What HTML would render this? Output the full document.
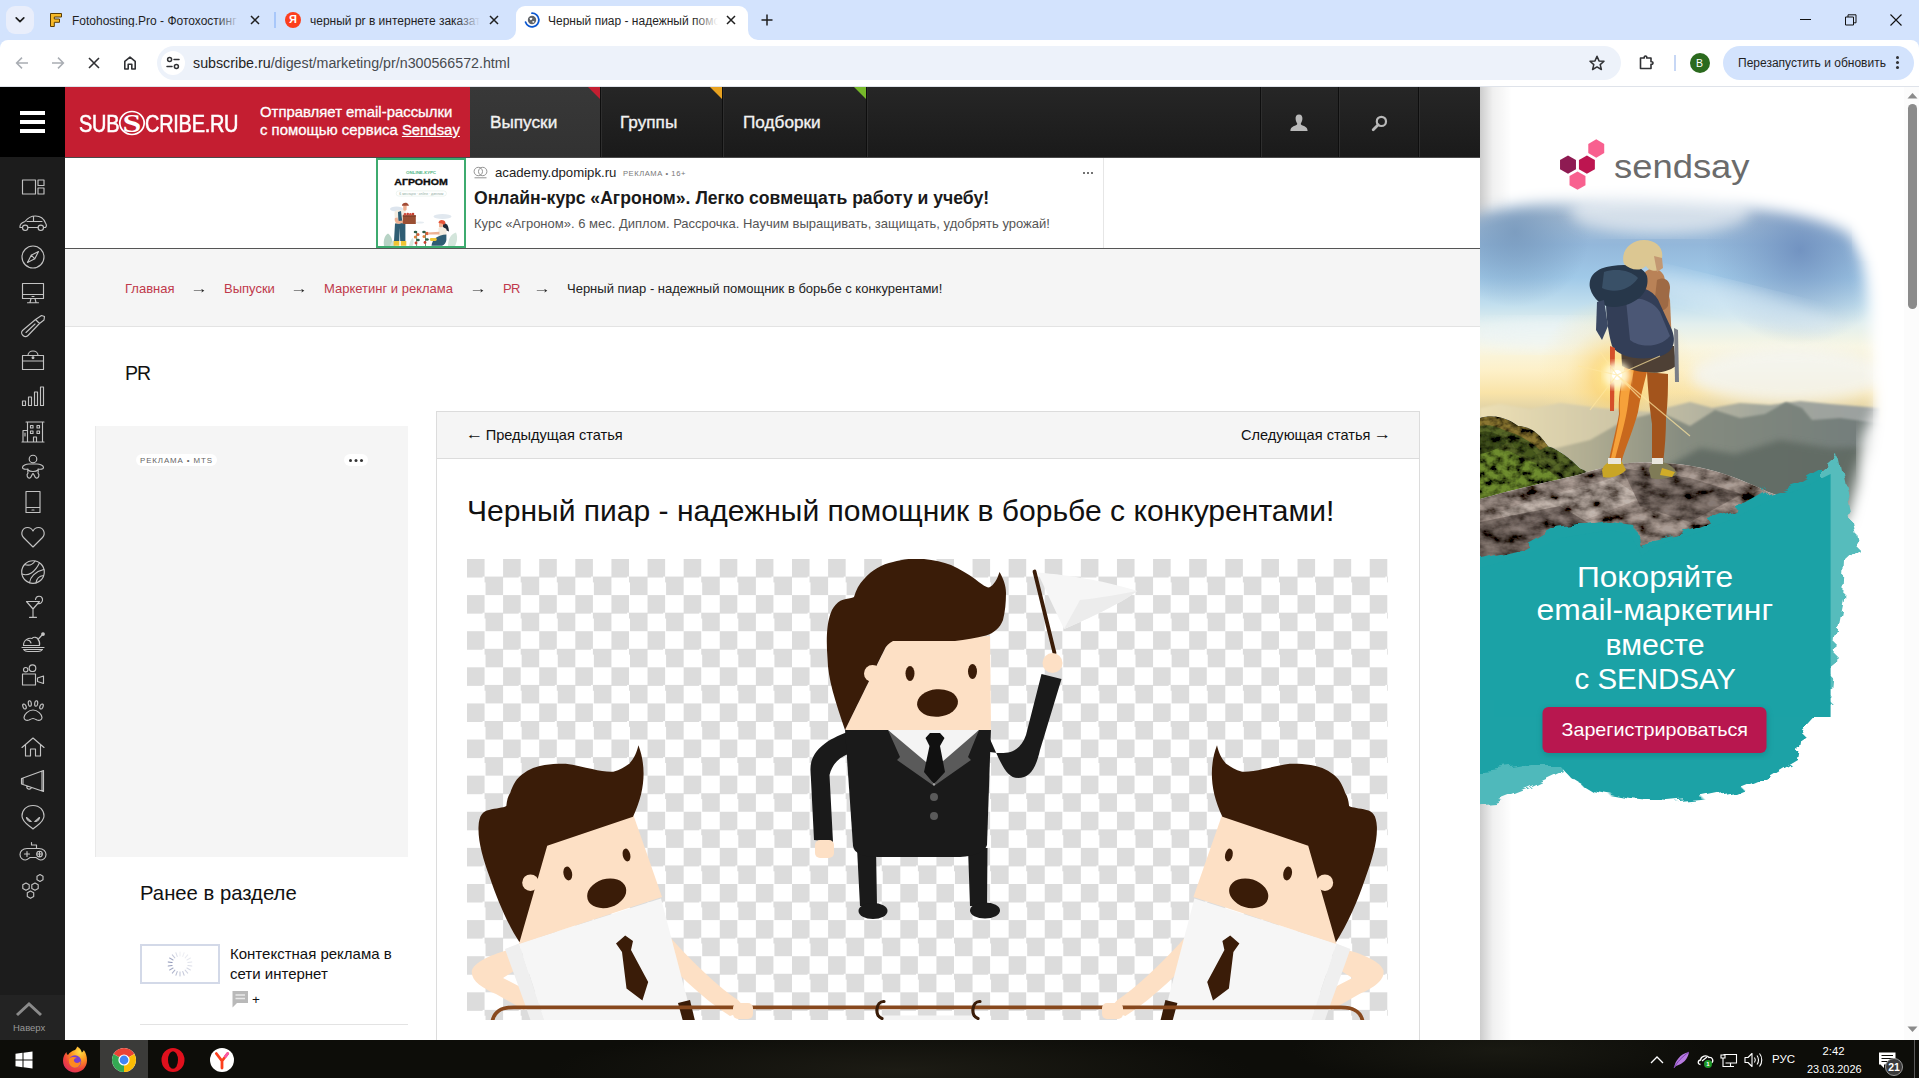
<!DOCTYPE html>
<html lang="ru">
<head>
<meta charset="utf-8">
<title>Черный пиар - надежный помощник в борьбе с конкурентами!</title>
<style>
*{box-sizing:border-box;margin:0;padding:0}
html,body{width:1919px;height:1078px;overflow:hidden;background:#fff}
body{font-family:"Liberation Sans",sans-serif;color:#111;position:relative}
.abs{position:absolute}
.t{position:absolute;white-space:nowrap;line-height:1}
/* ---------- browser chrome ---------- */
#tabstrip{left:0;top:0;width:1919px;height:40px;background:#d3e3fd}
#toolbar{left:0;top:40px;width:1919px;height:47px;background:#fff;border-radius:8px 8px 0 0;box-shadow:0 -8px 0 #d3e3fd;border-bottom:1px solid #dfe3ea}
#tabsearch{left:6px;top:6px;width:28px;height:28px;border-radius:9px;background:#e9eefb}
#acttab{left:516px;top:6px;width:232px;height:34px;background:#fff;border-radius:9px 9px 0 0}
#omni{left:157px;top:46px;width:1464px;height:34px;border-radius:17px;background:#edf2fa}
#siteinfo{left:161px;top:51px;width:24px;height:24px;border-radius:12px;background:#fff}
#relaunch{left:1723px;top:46px;width:191px;height:34px;border-radius:17px;background:#d3e3fd}
.tabtxt{font-size:12px;color:#1f1f1f;top:15px}
/* ---------- page ---------- */
#sidebar{left:0;top:87px;width:65px;height:953px;background:#1c1c1c}
#burger{left:0;top:87px;width:65px;height:70px;background:#000}
#hdr-red{left:65px;top:87px;width:405px;height:70px;background:#c41e31}
#hdr-dark{left:470px;top:87px;width:1010px;height:70px;background:linear-gradient(#262626,#1a1a1a)}
#crumbs{left:65px;top:248px;width:1415px;height:79px;background:#f5f5f5;border-top:1px solid #555;border-bottom:1px solid #e3e3e3}
#rightad{left:1480px;top:87px;width:423px;height:953px;background:#fff;overflow:hidden}
#scroll{left:1903px;top:87px;width:16px;height:953px;background:#fff}
#taskbar{left:0;top:1040px;width:1919px;height:38px;background:#15140f}

.hdrtxt{font-size:14.9px;color:#fff;-webkit-text-stroke:.3px #fff}
.navtxt{font-size:17.2px;color:#f2f2f2;top:114px;-webkit-text-stroke:.35px #f2f2f2}
.navsep{top:87px;width:2px;height:70px;background:#0e0e0e;border-right:1px solid #2e2e2e}
.tri{top:87px;width:0;height:0;border:6px solid transparent}

.sic{fill:none;stroke:#c2c2c2;stroke-width:1.150;stroke-linejoin:round;stroke-linecap:round}
.crumb{top:282px;font-size:13px}
.lnk{color:#c0394b}
.arr{color:#222;font-size:14px;top:281px;transform:scaleX(1.25);transform-origin:50% 50%}
.ar{display:inline-block;transform:scaleX(1.2) translateY(-1px)}
</style>
</head>
<body>
<!-- ======= BROWSER CHROME ======= -->
<div id="tabstrip" class="abs"></div>
<div id="toolbar" class="abs"></div>
<div id="tabsearch" class="abs"></div>
<div id="acttab" class="abs"></div>
<div id="omni" class="abs"></div>
<div id="siteinfo" class="abs"></div>
<div id="relaunch" class="abs"></div>

<!-- tab search chevron -->
<svg class="abs" style="left:13px;top:14px" width="14" height="12" viewBox="0 0 14 12"><path d="M3.2 3.8 L7 7.6 L10.8 3.8" fill="none" stroke="#1f1f1f" stroke-width="1.7" stroke-linecap="round" stroke-linejoin="round"/></svg>
<!-- tab 1 -->
<svg class="abs" style="left:48px;top:12px" width="16" height="16" viewBox="0 0 16 16"><path d="M2.5 1.5 H13.5 V5 H6.3 V7 H11.5 V10.3 H6.3 V14.5 H2.5 Z" fill="#f6b928" stroke="#5a3d05" stroke-width="1" stroke-linejoin="round"/></svg>
<div class="t tabtxt" style="left:72px;width:166px;overflow:hidden">Fotohosting.Pro - Фотохостинг</div>
<div class="abs" style="left:216px;top:8px;width:24px;height:24px;background:linear-gradient(90deg,rgba(211,227,253,0),#d3e3fd)"></div>
<svg class="abs" style="left:250px;top:15px" width="10" height="10" viewBox="0 0 10 10"><path d="M1 1 L9 9 M9 1 L1 9" stroke="#1f1f1f" stroke-width="1.5" fill="none"/></svg>
<div class="abs" style="left:274px;top:12px;width:2px;height:16px;background:#a8c7fa"></div>
<!-- tab 2 -->
<div class="abs" style="left:285px;top:12px;width:16px;height:16px;border-radius:8px;background:#fc3f1d"></div>
<div class="t" style="left:289px;top:14px;font-size:11px;font-weight:bold;color:#fff">Я</div>
<div class="t tabtxt" style="left:310px;width:170px;overflow:hidden">черный pr в интернете заказать</div>
<div class="abs" style="left:456px;top:8px;width:24px;height:24px;background:linear-gradient(90deg,rgba(211,227,253,0),#d3e3fd)"></div>
<svg class="abs" style="left:489px;top:15px" width="10" height="10" viewBox="0 0 10 10"><path d="M1 1 L9 9 M9 1 L1 9" stroke="#1f1f1f" stroke-width="1.5" fill="none"/></svg>
<!-- active tab feet -->
<svg class="abs" style="left:506px;top:30px" width="10" height="10" viewBox="0 0 10 10"><path d="M10 0 V10 H0 A10 10 0 0 0 10 0 Z" fill="#fff"/></svg>
<svg class="abs" style="left:748px;top:30px" width="10" height="10" viewBox="0 0 10 10"><path d="M0 0 V10 H10 A10 10 0 0 1 0 0 Z" fill="#fff"/></svg>
<!-- active tab favicon: spinner + globe -->
<svg class="abs" style="left:524px;top:12px" width="16" height="16" viewBox="0 0 16 16"><path d="M8 1.2 A6.8 6.8 0 1 1 1.6 10.2" fill="none" stroke="#0b57d0" stroke-width="1.8" stroke-linecap="round"/><circle cx="8" cy="8" r="4.2" fill="#5f6368"/><path d="M5.5 6.5 Q7 5 8.5 6.2 Q8 8 6.5 8.2 Z M8.5 9 Q10 8.5 10.5 10 Q9.5 11 8.5 10.5 Z" fill="#fff"/></svg>
<div class="t tabtxt" style="left:548px;width:170px;overflow:hidden">Черный пиар - надежный помощник</div>
<div class="abs" style="left:694px;top:8px;width:24px;height:24px;background:linear-gradient(90deg,rgba(255,255,255,0),#fff)"></div>
<svg class="abs" style="left:726px;top:15px" width="10" height="10" viewBox="0 0 10 10"><path d="M1 1 L9 9 M9 1 L1 9" stroke="#1f1f1f" stroke-width="1.5" fill="none"/></svg>
<svg class="abs" style="left:761px;top:14px" width="12" height="12" viewBox="0 0 12 12"><path d="M6 0.5 V11.5 M0.5 6 H11.5" stroke="#1f1f1f" stroke-width="1.5" fill="none"/></svg>
<!-- window controls -->
<div class="abs" style="left:1800px;top:19px;width:11px;height:1px;background:#111"></div>
<svg class="abs" style="left:1845px;top:14px" width="12" height="12" viewBox="0 0 12 12"><path d="M0.5 3 H8.5 V11 H0.5 Z M3 3 V0.8 H11 V8.8 H8.5" fill="none" stroke="#111" stroke-width="1"/></svg>
<svg class="abs" style="left:1890px;top:14px" width="12" height="12" viewBox="0 0 12 12"><path d="M0.5 0.5 L11.5 11.5 M11.5 0.5 L0.5 11.5" stroke="#111" stroke-width="1.1" fill="none"/></svg>
<!-- nav buttons -->
<svg class="abs" style="left:15px;top:56px" width="14" height="14" viewBox="0 0 14 14"><path d="M13 7 H1.8 M7 1.6 L1.6 7 L7 12.4" fill="none" stroke="#a9adb3" stroke-width="1.5"/></svg>
<svg class="abs" style="left:51px;top:56px" width="14" height="14" viewBox="0 0 14 14"><path d="M1 7 H12.2 M7 1.6 L12.4 7 L7 12.4" fill="none" stroke="#a9adb3" stroke-width="1.5"/></svg>
<svg class="abs" style="left:88px;top:57px" width="12" height="12" viewBox="0 0 12 12"><path d="M1 1 L11 11 M11 1 L1 11" stroke="#303134" stroke-width="1.6" fill="none"/></svg>
<svg class="abs" style="left:122px;top:55px" width="16" height="16" viewBox="0 0 16 16"><path d="M2.8 14 V6.4 L8 2.2 L13.2 6.4 V14 H9.8 V9.2 H6.2 V14 Z" fill="none" stroke="#303134" stroke-width="1.6" stroke-linejoin="round"/></svg>
<!-- site info (tune) -->
<svg class="abs" style="left:165px;top:55px" width="16" height="16" viewBox="0 0 16 16"><g fill="none" stroke="#303134" stroke-width="1.5" stroke-linecap="round"><circle cx="4.6" cy="4.6" r="2"/><path d="M9 4.6 H14"/><circle cx="11.4" cy="11.4" r="2"/><path d="M2 11.4 H7"/></g></svg>
<div class="t" style="left:193px;top:56px;font-size:14.250px;color:#1f1f1f">subscribe.ru<span style="color:#474a4f">/digest/marketing/pr/n300566572.html</span></div>
<!-- star -->
<svg class="abs" style="left:1588px;top:54px" width="18" height="18" viewBox="0 0 18 18"><path d="M9 2.2 L11 6.9 L16 7.3 L12.2 10.6 L13.4 15.5 L9 12.9 L4.6 15.5 L5.8 10.6 L2 7.3 L7 6.9 Z" fill="none" stroke="#303134" stroke-width="1.5" stroke-linejoin="round"/></svg>
<!-- extensions -->
<svg class="abs" style="left:1638px;top:53px" width="18" height="18" viewBox="0 0 18 18"><path d="M2.5 5 H6.3 C5.6 2.4 9.4 2.4 8.7 5 H13 V8.8 C15.6 8.1 15.6 11.9 13 11.2 V15.5 H2.5 Z" fill="none" stroke="#303134" stroke-width="1.6" stroke-linejoin="round"/></svg>
<div class="abs" style="left:1674px;top:55px;width:2px;height:16px;background:#c7d7f5"></div>
<div class="abs" style="left:1690px;top:53px;width:20px;height:20px;border-radius:10px;background:#2b6a1e"></div>
<div class="t" style="left:1696px;top:58px;font-size:10.5px;color:#fff">B</div>
<div class="t" style="left:1738px;top:57px;font-size:12px;color:#1f1f1f">Перезапустить и обновить</div>
<div class="abs" style="left:1896px;top:56px;width:3px;height:3px;border-radius:2px;background:#303134;box-shadow:0 5px 0 #303134,0 10px 0 #303134"></div>


<!-- ======= PAGE ======= -->
<div id="sidebar" class="abs"></div>
<div id="burger" class="abs"></div>
<div id="hdr-red" class="abs"></div>
<div id="hdr-dark" class="abs"></div>

<!-- burger -->
<div class="abs" style="left:20px;top:111px;width:25px;height:4px;background:#fff;box-shadow:0 9px 0 #fff,0 18px 0 #fff"></div>
<!-- logo -->
<div id="logo" class="t" style="left:79px;top:112.500px;font-size:23.200px;color:#fff;transform-origin:0 0;transform:scaleX(.86);letter-spacing:-.3px;-webkit-text-stroke:.55px #fff">SUB<span style="display:inline-block;width:30px"></span>CRIBE.RU</div>
<svg class="abs" style="left:117.500px;top:108.500px" width="28" height="28" viewBox="0 0 28 28"><ellipse cx="14" cy="14" rx="12.200" ry="11.500" fill="none" stroke="#fff" stroke-width="1.700"/><text x="14" y="22.600" text-anchor="middle" font-family="Liberation Serif, serif" font-size="26" font-weight="bold" fill="#fff" transform="translate(14 0) scale(1.3 1) translate(-14 0)">S</text></svg>
<div class="t hdrtxt" style="left:260px;top:105px">Отправляет email-рассылки</div>
<div class="t hdrtxt" style="left:260px;top:123px">с помощью сервиса <span style="text-decoration:underline">Sendsay</span></div>
<!-- nav -->
<div class="abs" style="left:470px;top:87px;width:130px;height:70px;background:linear-gradient(#383838,#323232)"></div>
<div class="abs navsep" style="left:600px"></div>
<div class="abs navsep" style="left:722px"></div>
<div class="abs navsep" style="left:866px"></div>
<div class="abs navsep" style="left:1260px"></div>
<div class="abs navsep" style="left:1338px"></div>
<div class="abs navsep" style="left:1418px"></div>
<div class="abs tri" style="left:588px;border-top-color:#c41e31;border-right-color:#c41e31"></div>
<div class="abs tri" style="left:710px;border-top-color:#e8a220;border-right-color:#e8a220"></div>
<div class="abs tri" style="left:854px;border-top-color:#76b82a;border-right-color:#76b82a"></div>
<div class="t navtxt" style="left:490px">Выпуски</div>
<div class="t navtxt" style="left:620px">Группы</div>
<div class="t navtxt" style="left:743px">Подборки</div>
<!-- user icon -->
<svg class="abs" style="left:1289px;top:113px" width="20" height="20" viewBox="0 0 20 20"><path d="M10 1.5 C12.6 1.5 13.6 3.6 13.4 6 C13.2 8.4 12.3 9.6 11.8 10.4 C11.6 11.6 12.4 12 14.2 12.8 C16.6 13.8 18.4 14.4 18.6 18 H1.4 C1.6 14.4 3.4 13.8 5.8 12.8 C7.6 12 8.4 11.6 8.2 10.4 C7.7 9.6 6.8 8.4 6.6 6 C6.4 3.6 7.4 1.5 10 1.5 Z" fill="#b9b9b9"/></svg>
<!-- search icon -->
<svg class="abs" style="left:1371px;top:114px" width="18" height="18" viewBox="0 0 18 18"><circle cx="10.4" cy="7.4" r="4.6" fill="none" stroke="#b9b9b9" stroke-width="2.2"/><path d="M7.2 10.8 L2.2 15.8" stroke="#b9b9b9" stroke-width="2.8" stroke-linecap="round"/></svg>


<!-- top ad banner -->
<div class="abs" style="left:65px;top:157px;width:1415px;height:1px;background:#4a4a4a"></div>
<div class="abs" style="left:1103px;top:158px;width:1px;height:90px;background:#e6e6e6"></div>
<div class="abs" style="left:376px;top:158px;width:90px;height:90px;border:2px solid #3dab6f;background:#fff;overflow:hidden">
<svg width="86" height="86" viewBox="0 0 86 86" style="position:absolute;left:0;top:0">
<text x="43" y="13.900" text-anchor="middle" font-family="Liberation Sans, sans-serif" font-size="3.900" font-weight="bold" fill="#52b584" textLength="30" lengthAdjust="spacingAndGlyphs">ONLINE-КУРС</text>
<text x="43" y="25.200" text-anchor="middle" font-family="Liberation Sans, sans-serif" font-size="9.700" font-weight="bold" fill="#0d0d0d" stroke="#0d0d0d" stroke-width=".35" textLength="53.500" lengthAdjust="spacingAndGlyphs">АГРОНОМ</text>
<rect x="18.200" y="30.900" width="50.200" height="5.200" rx="2.600" fill="#fff" stroke="#dcebe3" stroke-width=".5"/>
<text x="43.300" y="34.600" text-anchor="middle" font-family="Liberation Sans, sans-serif" font-size="2.700" fill="#8fae9f" textLength="44" lengthAdjust="spacingAndGlyphs">6 месяцев · online · диплом</text>
<!-- clouds, leaves -->
<ellipse cx="18.500" cy="49" rx="6.500" ry="2.400" fill="#dde5ee"/><ellipse cx="64.500" cy="56.500" rx="9" ry="2.500" fill="#e1e8ef"/><ellipse cx="42" cy="62.500" rx="4" ry="1" fill="#e6ecf1"/>
<path d="M6 86 C5 80 7 75 10 73.500 C13.500 76 15 81 14.500 86 Z" fill="#b7d3c5"/><path d="M12 86 C13 82 15 80 17.500 79.500 C18.500 82 18 84.500 17 86 Z" fill="#cfe2d8"/>
<path d="M70 86 C70 79 73 74 78 72.500 C80 77 79 82 77 86 Z" fill="#d3e5db"/><path d="M31 86 C31.500 82 33 79 35 78 C36 81 35.500 84 34.500 86 Z" fill="#d8e8df"/>
<!-- farmer -->
<path d="M16.500 53 C16.500 50.500 19 50 22 50 H27.500 L28.300 64 H17 Z" fill="#f3ece0"/>
<path d="M20 52 L23 51 L24.500 63.500 H27.400 L27.400 81 H22.200 L21.700 68 L21.300 81 H16 L17 63.500 H20.500 Z" fill="#2f5d73"/>
<path d="M25.200 46 C25.200 44.500 28.700 44.500 28.700 46.500 L28.500 50 C27.500 51 26 51 25.200 50 Z" fill="#eeb193"/>
<path d="M23.900 45.700 C24 42.500 29 41.500 30.400 44.500 L31 45.700 Z" fill="#a24b35"/>
<path d="M15.600 81 H21.300 V85.800 H15.600 Z M22.800 81 H28.300 V85.800 H22.800 Z" fill="#f0c534"/>
<path d="M17 58 C16 61 18 63.500 21 64 L26 62.500 L25.500 60.500 L20.500 61 L19.500 57.500 Z" fill="#eeb193"/>
<rect x="24.800" y="55.300" width="13" height="8.700" fill="#9a4f33"/><rect x="24.800" y="55.300" width="13" height="1.400" fill="#7f3f28"/>
<circle cx="27" cy="54.300" r="1.300" fill="#d14a3a"/><circle cx="29.700" cy="54" r="1.300" fill="#c7402f"/><circle cx="32.400" cy="54.300" r="1.300" fill="#d14a3a"/><circle cx="35" cy="54" r="1.300" fill="#c7402f"/>
<!-- plants -->
<path d="M38.600 86 V72 M47.500 86 V72" stroke="#3f7a50" stroke-width=".8"/>
<ellipse cx="37.500" cy="72" rx="1.800" ry="1.300" fill="#2f5d46"/><ellipse cx="40" cy="74.500" rx="1.500" ry="1.500" fill="#d9603a"/><ellipse cx="37.300" cy="77" rx="1.500" ry="1.500" fill="#e0803c"/><ellipse cx="40" cy="80" rx="1.800" ry="1.200" fill="#2f5d46"/><ellipse cx="38" cy="83" rx="1.400" ry="1.400" fill="#c7402f"/>
<ellipse cx="46" cy="72" rx="1.800" ry="1.300" fill="#2f5d46"/><ellipse cx="49" cy="73.500" rx="1.700" ry="1.700" fill="#d9603a"/><ellipse cx="46" cy="76.500" rx="1.500" ry="1.500" fill="#e0803c"/><ellipse cx="49" cy="79.500" rx="1.800" ry="1.200" fill="#2f5d46"/><ellipse cx="47" cy="82.500" rx="1.400" ry="1.400" fill="#c7402f"/>
<!-- woman -->
<path d="M64.900 63 C68 62.500 70 65 70.500 68 L71 71.500 L67.500 70 L65 67 Z" fill="#1f2a38"/>
<path d="M61 63.500 C61 61.800 65 61.800 65 64 L64.900 67 C64 68 62 68 61 67 Z" fill="#eeb193"/>
<path d="M60.500 63 C60.500 59.500 66 59 67.500 62.500 L66 64.900 C64.500 63.500 62.500 63.300 60.500 63 Z" fill="#e8553a"/>
<path d="M60.500 68 C62 67 66 67 68.400 69 L68.400 76.500 H60.500 Z" fill="#f3ece0"/>
<path d="M53.500 85.800 C54 79 60 75 68.400 74.500 L68.400 80 C68 83 66 85 64 85.800 Z" fill="#2f5d73"/>
<path d="M50 72.500 L61.400 71.800 L61.400 74.500 L50 74.500 Z" fill="#eeb193"/>
<rect x="51.800" y="78" width="7" height="3" rx="1.400" fill="#f0c534"/>
</svg></div>
<svg class="abs" style="left:473px;top:166px" width="15" height="14" viewBox="0 0 15 14"><circle cx="5.300" cy="5.500" r="4.200" fill="none" stroke="#888" stroke-width=".9"/><circle cx="9.700" cy="5.500" r="4.200" fill="none" stroke="#888" stroke-width=".9"/><path d="M1.500 11.800 H13.500" stroke="#888" stroke-width=".9"/></svg>
<div class="t" style="left:495px;top:166px;font-size:13.2px;color:#222">academy.dpomipk.ru</div>
<div class="t" style="left:623px;top:170px;font-size:7.6px;color:#777;letter-spacing:.55px">РЕКЛАМА • 16+</div>
<div class="t" style="left:474px;top:190px;font-size:17.6px;font-weight:bold;color:#1a1a1a">Онлайн-курс «Агроном». Легко совмещать работу и учебу!</div>
<div class="t" style="left:474px;top:217px;font-size:13px;color:#555">Курс «Агроном». 6 мес. Диплом. Рассрочка. Научим выращивать, защищать, удобрять урожай!</div>
<div class="abs" style="left:1083px;top:172px;width:2px;height:2px;border-radius:1px;background:#444;box-shadow:4px 0 0 #444,8px 0 0 #444"></div>

<div id="crumbs" class="abs"></div>

<div class="t crumb lnk" style="left:125px">Главная</div>
<div class="t crumb arr" style="left:192px">→</div>
<div class="t crumb lnk" style="left:224px">Выпуски</div>
<div class="t crumb arr" style="left:292px">→</div>
<div class="t crumb lnk" style="left:324px">Маркетинг и реклама</div>
<div class="t crumb arr" style="left:471px">→</div>
<div class="t crumb lnk" style="left:503px;letter-spacing:-.6px">PR</div>
<div class="t crumb arr" style="left:535px">→</div>
<div class="t crumb" style="left:567px;color:#222">Черный пиар - надежный помощник в борьбе с конкурентами!</div>
<div class="t" style="left:125px;top:364px;font-size:19.5px;color:#111;letter-spacing:-.9px">PR</div>

<!-- sidebar icons -->
<svg class="abs sic" style="left:18px;top:172px" width="30" height="30" viewBox="0 0 30 30"><path d="M4.5 8 H17.5 V22 H4.5 Z M20 8 H26 V13.5 H20 Z M20 16 H26 V22 H20 Z"/></svg>
<svg class="abs sic" style="left:18px;top:208px" width="30" height="30" viewBox="0 0 30 30"><path d="M2 19.5 C1.5 16 4 14.5 7 13.5 C10 9.5 13 8 17.5 8 C23 8 26 11 27.5 15 C28.5 16.5 28.5 18.5 27.5 19.5 H25.5 M20 19.5 H10 M4.5 19.5 H2"/><circle cx="7.2" cy="19.8" r="2.7"/><circle cx="22.8" cy="19.8" r="2.7"/><path d="M9 13.5 H24 M15.5 8.5 V13.5"/></svg>
<svg class="abs sic" style="left:18px;top:242px" width="30" height="30" viewBox="0 0 30 30"><circle cx="15" cy="15" r="11"/><path d="M20.5 9.5 L16.8 16.8 L9.5 20.5 L13.2 13.2 Z M13.2 13.2 L16.8 16.8"/></svg>
<svg class="abs sic" style="left:18px;top:278px" width="30" height="30" viewBox="0 0 30 30"><path d="M4.5 5.5 H25.5 V20.5 H4.5 Z M4.5 16.5 H25.5 M13 20.5 L12 24.5 M17 20.5 L18 24.5 M9.5 24.7 H20.5 M14 18.5 H16"/></svg>
<svg class="abs sic" style="left:18px;top:311px" width="30" height="30" viewBox="0 0 30 30"><path d="M17.5 8.5 L23.5 4.5 L26.5 5.5 L26 9 L21.5 12.5 Z M17.5 8.5 L4.5 19.5 C3 21 3.5 23 5 24.5 C6.5 26 8.5 26 10 24.5 L21.5 12.5 M8 21.5 L17 13"/></svg>
<svg class="abs sic" style="left:18px;top:345px" width="30" height="30" viewBox="0 0 30 30"><path d="M4.5 10.5 H25.5 V24.5 H4.5 Z M4.5 16 H25.5 M10 10.5 C10 4.5 20 4.5 20 10.5"/><circle cx="15" cy="12.8" r="0.9" fill="#c8c8c8"/></svg>
<svg class="abs sic" style="left:18px;top:381px" width="30" height="30" viewBox="0 0 30 30"><path d="M4.5 20 H7.5 V24.5 H4.5 Z M10.5 16 H13.5 V24.5 H10.5 Z M16.5 11 H19.5 V24.5 H16.5 Z M22.5 6 H25.5 V24.5 H22.5 Z"/></svg>
<svg class="abs sic" style="left:18px;top:417px" width="30" height="30" viewBox="0 0 30 30"><path d="M4 25 H26 M9.5 25 V5 H24.5 V25 M8 5 H26 M5 25 V13.5 H9.5 M15.5 25 V20 H18.5 V25 M12.5 8.5 H15 V11 H12.5 Z M19 8.5 H21.5 V11 H19 Z M12.5 14 H15 V16.5 H12.5 Z M19 14 H21.5 V16.5 H19 Z M7 16 V19"/></svg>
<svg class="abs sic" style="left:18px;top:452px" width="30" height="30" viewBox="0 0 30 30"><circle cx="15" cy="7" r="3.8"/><path d="M11 12 C8 12 4.5 13.5 4.5 15.5 C4.5 17.5 7.5 17.5 10 17 C9.5 19 9.5 20 10 21 M19 12 C22 12 25.5 13.5 25.5 15.5 C25.5 17.5 22.5 17.5 20 17 C20.5 19 20.5 20 20 21 M11 12 H19 M10 18 C12 20 18 20 20 18 M10 21 C8 23 9.5 26.5 12 26 C13.5 25.5 13.5 22.5 15 21.5 C16.5 22.5 16.5 25.5 18 26 C20.5 26.5 22 23 20 21"/></svg>
<svg class="abs sic" style="left:18px;top:487px" width="30" height="30" viewBox="0 0 30 30"><path d="M8 4.5 H22 V25.5 H8 Z M8 20.5 H22 M14 23 H16"/></svg>
<svg class="abs sic" style="left:18px;top:522px" width="30" height="30" viewBox="0 0 30 30"><path d="M15 25 L5.5 15.5 C2 11.5 4.5 5.5 9.5 5.5 C12 5.5 14 7 15 9 C16 7 18 5.5 20.5 5.5 C25.5 5.5 28 11.5 24.5 15.5 Z"/></svg>
<svg class="abs sic" style="left:18px;top:557px" width="30" height="30" viewBox="0 0 30 30"><circle cx="15" cy="15" r="11.3"/><path d="M6.5 7.5 C11 9 14.5 8 17 4 M4 17 C10 19.5 17 15.5 21.5 5.8 M11.5 25.7 C12 20.5 17 14.5 25.8 12.5 M18 26 C18.5 22 21 19 25.5 18.5"/></svg>
<svg class="abs sic" style="left:18px;top:592px" width="30" height="30" viewBox="0 0 30 30"><path d="M8.5 9.5 H21.5 L15 17 Z M15 17 V25 M11.5 25.3 H18.5 M17.5 7.5 C18 3.5 23.5 3 24.5 7 C25 10 22.5 12 20 11.5"/></svg>
<svg class="abs sic" style="left:18px;top:627px" width="30" height="30" viewBox="0 0 30 30"><path d="M5.5 18.5 C5.5 12.5 11 10.5 14 11.5 C15.5 9.5 19.5 10 20 12.5 L24 8 M5.5 18.5 H21.5 C22 16 21.5 14 20 12.5 M9 13 C11 13 12.5 14 13 16"/><circle cx="25" cy="7" r="1.3" fill="#c8c8c8"/><path d="M4 20.5 H26 M5.5 22.5 C7 24.5 9 24.5 10 24.5 H20 C21 24.5 23 24.5 24.5 22.5 Z"/></svg>
<svg class="abs sic" style="left:18px;top:661px" width="30" height="30" viewBox="0 0 30 30"><circle cx="7.7" cy="8.7" r="2.2"/><circle cx="14.5" cy="7.2" r="3.3"/><path d="M4.5 13 H17.5 V24 H4.5 Z M19.5 17 L25.5 15 V22.5 L19.5 20.5 Z"/></svg>
<svg class="abs sic" style="left:18px;top:696px" width="30" height="30" viewBox="0 0 30 30"><ellipse cx="6.5" cy="10.5" rx="1.5" ry="2.6" transform="rotate(-25 6.5 10.5)"/><ellipse cx="11.8" cy="7.5" rx="1.5" ry="2.8" transform="rotate(-8 11.8 7.5)"/><ellipse cx="18.2" cy="7.5" rx="1.5" ry="2.8" transform="rotate(8 18.2 7.5)"/><ellipse cx="23.5" cy="10.5" rx="1.5" ry="2.6" transform="rotate(25 23.5 10.5)"/><path d="M15 14 C10.5 14 6 18.5 6 21.5 C6 24 8.5 25 11 24 C13 23 14 22.5 15 22.5 C16 22.5 17 23 19 24 C21.5 25 24 24 24 21.5 C24 18.5 19.5 14 15 14 Z"/></svg>
<svg class="abs sic" style="left:18px;top:732px" width="30" height="30" viewBox="0 0 30 30"><path d="M4 15.5 L15 6 L26 15.5 M7.5 13 V24 H12.5 V17 H17.5 V24 H22.5 V13"/></svg>
<svg class="abs sic" style="left:18px;top:766px" width="30" height="30" viewBox="0 0 30 30"><path d="M3.5 12.5 V18 L5 18.5 V12 Z M5 12 L25.5 4.5 V25.5 L5 18.5 M24 5 V25 M9 20 C8 23 12 24.5 13.5 21.5"/></svg>
<svg class="abs sic" style="left:18px;top:802px" width="30" height="30" viewBox="0 0 30 30"><path d="M15 3.5 C8 3.5 4 8.5 4 14 C4 20 10.5 23 15 27 C19.5 23 26 20 26 14 C26 8.5 22 3.5 15 3.5 Z M8.5 15.5 L13 19.5 M21.5 15.5 L17 19.5" /><path d="M8.5 15.5 C9 18 11 19.5 13 19.5 M21.5 15.5 C21 18 19 19.5 17 19.5"/></svg>
<svg class="abs sic" style="left:18px;top:837px" width="30" height="30" viewBox="0 0 30 30"><path d="M9 11.5 H21 C25.5 11.5 28 14.5 28 17.5 C28 21 25 23 22.5 23 C20.5 23 19.5 21.5 18 20.5 H12 C10.5 21.5 9.5 23 7.5 23 C5 23 2 21 2 17.5 C2 14.5 4.500 11.5 9 11.5 Z M18.5 11.5 V8 H13.5 V5.5 M6.5 17 H11.5 M9 14.5 V19.500"/><circle cx="21.5" cy="17" r="2.8"/><path d="M19 17 H24 M21.5 14.5 V19.5"/></svg>
<svg class="abs sic" style="left:18px;top:871px" width="30" height="30" viewBox="0 0 30 30"><path d="M22 3.5 L25 5.2 V8.800 L22 10.5 L19 8.800 V5.2 Z M17 12 L20.200 13.800 V17.500 L17 19.300 L13.800 17.500 V13.800 Z M8 12 L11.200 13.800 V17.500 L8 19.300 L4.800 17.500 V13.800 Z M12.500 20 L15.700 21.800 V25.500 L12.500 27.300 L9.300 25.500 V21.800 Z"/></svg>
<div class="abs" style="left:0;top:995px;width:65px;height:45px;background:#232323"></div>
<svg class="abs" style="left:15px;top:1001px" width="28" height="16" viewBox="0 0 28 16"><path d="M2 14 L14 3 L26 14" fill="none" stroke="#8a8a8a" stroke-width="3"/></svg>
<div class="t" style="left:13px;top:1023px;font-size:9.5px;color:#999">Наверх</div>

<!-- left column -->
<div class="abs" style="left:95px;top:426px;width:313px;height:431px;background:#f5f5f5;border-left:1px solid #e9e9e9"></div>
<div class="abs" style="left:136px;top:454px;width:81px;height:12px;border-radius:6px;background:#fff"></div>
<div class="t" style="left:140px;top:456.500px;font-size:7.9px;color:#666;letter-spacing:.9px">РЕКЛАМА • MTS</div>
<div class="abs" style="left:344px;top:454px;width:24px;height:12px;border-radius:6px;background:#fff"></div>
<div class="abs" style="left:349px;top:459px;width:3px;height:3px;border-radius:2px;background:#333;box-shadow:5.500px 0 0 #333,11px 0 0 #333"></div>
<div class="t" style="left:140px;top:883px;font-size:20.3px;color:#111">Ранее в разделе</div>
<div class="abs" style="left:140px;top:944px;width:80px;height:40px;border:2px solid #d3d9e8;background:#fff"></div>
<svg class="abs" style="left:166px;top:950px" width="28" height="28" viewBox="-14 -14 28 28"><g stroke="#8b93b5" stroke-width="1" stroke-linecap="round">
<path d="M0 -12 V-8" opacity=".15"/><path d="M0 -12 V-8" transform="rotate(20)" opacity=".15"/><path d="M0 -12 V-8" transform="rotate(40)" opacity=".18"/><path d="M0 -12 V-8" transform="rotate(60)" opacity=".2"/><path d="M0 -12 V-8" transform="rotate(80)" opacity=".25"/><path d="M0 -12 V-8" transform="rotate(100)" opacity=".3"/><path d="M0 -12 V-8" transform="rotate(120)" opacity=".35"/><path d="M0 -12 V-8" transform="rotate(140)" opacity=".4"/><path d="M0 -12 V-8" transform="rotate(160)" opacity=".5"/><path d="M0 -12 V-8" transform="rotate(180)" opacity=".55"/><path d="M0 -12 V-8" transform="rotate(200)" opacity=".6"/><path d="M0 -12 V-8" transform="rotate(220)" opacity=".7"/><path d="M0 -12 V-8" transform="rotate(240)" opacity=".8"/><path d="M0 -12 V-8" transform="rotate(260)" opacity=".9"/><path d="M0 -12 V-8" transform="rotate(280)"/><path d="M0 -12 V-8" transform="rotate(300)" opacity=".8"/><path d="M0 -12 V-8" transform="rotate(320)" opacity=".5"/><path d="M0 -12 V-8" transform="rotate(340)" opacity=".3"/></g></svg>
<div class="t" style="left:230px;top:946px;font-size:15px;color:#111">Контекстная реклама в</div>
<div class="t" style="left:230px;top:966px;font-size:15px;color:#111">сети интернет</div>
<svg class="abs" style="left:231px;top:990px" width="20" height="19" viewBox="0 0 20 19"><path d="M1.500 1 H17 V13 H6 L1.500 17.500 Z" fill="#b9b9b9"/><path d="M4.500 5 H14 M4.500 8.500 H14" stroke="#e9e9e9" stroke-width="1.600"/></svg>
<div class="t" style="left:252px;top:993px;font-size:13.500px;color:#111">+</div>
<div class="abs" style="left:140px;top:1024px;width:268px;height:1px;background:#e3e3e3"></div>


<!-- article -->
<div class="abs" style="left:436px;top:411px;width:984px;height:640px;border:1px solid #dcdcdc;background:#fff"></div>
<div class="abs" style="left:437px;top:412px;width:982px;height:47px;background:#f5f5f5;border-bottom:1px solid #dcdcdc"></div>
<div class="t" style="left:467px;top:428px;font-size:14.6px;color:#111"><span class="ar">←</span> Предыдущая статья</div>
<div class="t" style="left:1241px;top:428px;font-size:14.6px;color:#111">Следующая статья <span class="ar">→</span></div>
<div class="t" style="left:467px;top:495.500px;font-size:30.050px;color:#111">Черный пиар - надежный помощник в борьбе с конкурентами!</div>
<div id="pic" class="abs" style="left:467px;top:559px;width:921px;height:461px;background-color:#fff;background-image:conic-gradient(#fff 25%,#dcdcdc 0 50%,#fff 0 75%,#dcdcdc 0);background-size:36.120px 36.120px;background-position:0 0;overflow:hidden">
<svg width="921" height="461" viewBox="467 559 921 461" style="position:absolute;left:0;top:0">
<defs>
<g id="puller">
 <!-- arms -->
 <path d="M516 948 C498 952 476 960 472 970 C470 980 482 988 496 994 L524 1010 L534 994 L503 978 L522 966 Z" fill="#fde0c5"/>
 <path d="M660 925 C680 950 715 985 738 1000 L747 1010 L730 1016 C700 997 672 968 652 946 Z" fill="#fde0c5"/>
 <!-- shirt -->
 <path d="M519 943.500 L661 898.500 L694 1025 L546 1025 Z" fill="#f6f6f6"/>
 <path d="M505 949 L519 943.500 L546 1025 L532 1025 C524 1000 514 975 505 949 Z" fill="#efefef"/>
 <path d="M678 1003 L690 1000 L696 1025 H684 Z" fill="#3a1c08"/>
 <!-- face -->
 <path d="M540 840 L633 814 L662 897 L519 944 Z" fill="#fde0c5"/>
 <!-- hair -->
 <path d="M638.400 745.300 C646 765 646 790 633 816.700 L547.200 845.700 L519.500 942.200 C508 925 497 899 490 878 C483 859 478 842 478.500 827 C479 815 483 811 489 810 C496 808 503 808 506.300 806 C507 800 508 796 510.200 793 C513 784 517 778 522 774.400 C529 769 537 766 544.600 765 C552 764 559 763.500 565.700 763.800 C575 765 584 767.500 592.200 769 C600 771 607 772 613.300 771.700 C620 770 625 767 629.200 763.800 C634 759 637 752 638.400 745.300 Z" fill="#3a1c08"/>
 <circle cx="530.500" cy="882.700" r="8.300" fill="#fde0c5"/>
 <!-- eyes, mouth -->
 <ellipse cx="567.800" cy="873.500" rx="4.300" ry="7" fill="#3a1c08" transform="rotate(-12 567.800 873.500)"/>
 <ellipse cx="626.500" cy="855" rx="3.800" ry="6.500" fill="#3a1c08" transform="rotate(-12 626.500 855)"/>
 <ellipse cx="606.700" cy="893.300" rx="20" ry="14.300" fill="#3a1c08" transform="rotate(-17 606.700 893.300)"/>
 <!-- tie -->
 <path d="M616 943.500 L625.200 935.600 L633 941 L631 950 L648.200 982 L642.400 1000.400 L626.500 988.500 L622 952 Z" fill="#3a1c08"/>
</g>
</defs>
<use href="#puller"/>
<use href="#puller" transform="translate(1855.400 0) scale(-1 1)"/>
<!-- rope -->
<path d="M492 1024 C493 1012 500 1007.300 514 1007.300 H1341 C1355 1007.300 1362 1012 1363 1024" fill="none" stroke="#87481d" stroke-width="3.800"/>
<rect x="880" y="1015.500" width="96" height="5" fill="#f4f4f4"/>
<path d="M884 1001.500 C876 1001 874 1016 882 1018.500 M980 1001.500 C972 1001 970 1016 978 1018.500" fill="none" stroke="#3a1c08" stroke-width="3.200" stroke-linecap="round"/>
<rect x="733" y="1003" width="20" height="16" rx="5" fill="#fde0c5"/><rect x="1102" y="1003" width="21" height="16" rx="5" fill="#fde0c5"/>
<!-- centre man -->
<path d="M1037.500 572.500 C1070 575 1110 582 1137 591 C1120 604 1090 618 1064 629 Z" fill="#f6f6f6"/>
<path d="M1080 600 C1100 598 1120 594 1137 591 C1120 604 1090 618 1064 629 Z" fill="#ececec"/>
<path d="M1034.500 571.500 L1054.500 653" stroke="#3a1c08" stroke-width="3.800" stroke-linecap="round"/>
<circle cx="1052.500" cy="663" r="10" fill="#fde0c5"/>
<!-- arms -->
<path d="M848 732 C825 740 810 752 810.500 770 L814 840 L833 842 L829.500 775 C832 765 838 758 848 754 Z" fill="#1a1a1a"/>
<rect x="815" y="840" width="19" height="18" rx="5" fill="#fde0c5"/>
<path d="M988 735 C1000 760 1005 778 1018 778 C1030 778 1036 768 1040 750 L1061.500 679 L1041.500 674 L1026 735 C1020 752 1008 755 990 752 Z" fill="#1a1a1a"/>
<!-- legs & shoes -->
<path d="M857 848 H876 L877 906 H860 Z M968 848 H987.500 L987 906 H970 Z" fill="#1a1a1a"/>
<ellipse cx="873" cy="911" rx="14.500" ry="8" fill="#1a1a1a"/><ellipse cx="985" cy="910.500" rx="15" ry="8" fill="#1a1a1a"/>
<!-- body -->
<path d="M845 729 H991 L987 845 C985 852 975 856 960 857 H878 C862 857 854 853 853 846 Z" fill="#1a1a1a"/>
<path d="M888 730 H979 L934 786 Z" fill="#f4f4f4"/>
<path d="M888 730 L900 757 L897 760 L934 786 L926 762 Z" fill="#5a5a5a"/>
<path d="M979 730 L968 757 L971 760 L934 786 L942 762 Z" fill="#5a5a5a"/>
<path d="M925.500 738 L930 733 H940 L944.500 738 L940 746 L945 772 L934 784 L924 772 L929.500 746 Z" fill="#111"/>
<circle cx="934" cy="797" r="4" fill="#5a5a5a"/><circle cx="934" cy="816" r="4" fill="#5a5a5a"/>
<!-- face -->
<path d="M889 641 L990 636 L991 730 L845 730 Z" fill="#fde0c5"/>
<!-- hair -->
<path d="M845 730 C835 700 828 680 827.500 658 C826 640 827 625 829.500 617 C832 607 838 600 846 599 C850 598 853 598 854 597 C856 590 859 584 864 579 C872 570 882 564 893 562 C903 559 914 558 924 559 C934 560 943 562 951 565 C960 569 968 574 975 579 C980 583 985 587 989 587.500 C994 585 997 580 999.500 572 C1003 578 1006 585 1006 593 C1006 603 1005 612 1003 620 C1000 628 994 633 986 635.500 C976 638 965 640 955 641 L893 641 C889 643 886 646 884.500 649.500 Z" fill="#3a1c08"/>
<circle cx="872.500" cy="673.500" r="8.500" fill="#fde0c5"/>
<ellipse cx="910" cy="673.500" rx="4.500" ry="7.500" fill="#3a1c08"/><ellipse cx="972.500" cy="671.500" rx="4.500" ry="7.500" fill="#3a1c08"/>
<ellipse cx="937.500" cy="703" rx="20.500" ry="13.700" fill="#3a1c08" transform="rotate(-5 937.500 703)"/>
</svg>
</div>

<div id="rightad" class="abs">

<svg width="423" height="953" viewBox="1480 87 423 953" style="position:absolute;left:0;top:0">
<defs>
<linearGradient id="sky" x1="0" y1="195" x2="0" y2="470" gradientUnits="userSpaceOnUse">
<stop offset="0" stop-color="#d5dfe9"/><stop offset=".08" stop-color="#a6bcd3"/><stop offset=".18" stop-color="#93b7da"/><stop offset=".3" stop-color="#a0c9e8"/><stop offset=".4" stop-color="#c2dfee"/><stop offset=".47" stop-color="#e2efee"/><stop offset=".55" stop-color="#f8f6e3"/><stop offset=".64" stop-color="#fdf0c8"/><stop offset=".72" stop-color="#f9e3a8"/><stop offset=".78" stop-color="#e0d2a6"/><stop offset="1" stop-color="#8e9488"/>
</linearGradient>
<radialGradient id="sun" cx="1617" cy="376" r="80" gradientUnits="userSpaceOnUse">
<stop offset="0" stop-color="#fffbe6"/><stop offset=".14" stop-color="#ffe58a" stop-opacity=".95"/><stop offset=".32" stop-color="#fbd067" stop-opacity=".55"/><stop offset=".65" stop-color="#fbe3a0" stop-opacity=".25"/><stop offset="1" stop-color="#fbe3a0" stop-opacity="0"/>
</radialGradient>
<radialGradient id="cloudL" cx="1515" cy="232" r="75" gradientUnits="userSpaceOnUse"><stop offset="0" stop-color="#7596ba" stop-opacity=".8"/><stop offset="1" stop-color="#6f93b8" stop-opacity="0"/></radialGradient>
<radialGradient id="cloudR" cx="1800" cy="250" r="95" gradientUnits="userSpaceOnUse"><stop offset="0" stop-color="#6c8cbc" stop-opacity=".85"/><stop offset="1" stop-color="#7b9cc4" stop-opacity="0"/></radialGradient>
<linearGradient id="shade" x1="1480" y1="0" x2="1512" y2="0" gradientUnits="userSpaceOnUse"><stop offset="0" stop-color="#000" stop-opacity=".2"/><stop offset=".4" stop-color="#000" stop-opacity=".06"/><stop offset="1" stop-color="#000" stop-opacity="0"/></linearGradient>
<linearGradient id="mt1" x1="1480" y1="0" x2="1880" y2="0" gradientUnits="userSpaceOnUse"><stop offset="0" stop-color="#ecdfb4"/><stop offset=".35" stop-color="#cdc5a6"/><stop offset=".7" stop-color="#a3a79c"/><stop offset="1" stop-color="#9aa0a0"/></linearGradient>
<linearGradient id="mt2" x1="1480" y1="0" x2="1885" y2="0" gradientUnits="userSpaceOnUse"><stop offset="0" stop-color="#d6cba4"/><stop offset=".28" stop-color="#aeab91"/><stop offset=".5" stop-color="#868c80"/><stop offset="1" stop-color="#717c7a"/></linearGradient>
<filter id="rocktex" x="0" y="0" width="100%" height="100%"><feTurbulence type="fractalNoise" baseFrequency=".05 .09" numOctaves="4" seed="3" result="n"/><feColorMatrix in="n" type="matrix" values="1.9 0 0 0 -.42  1.9 0 0 0 -.45  1.9 0 0 0 -.47  0 0 0 0 1" result="g"/><feComposite in="g" in2="SourceGraphic" operator="in" result="gi"/><feBlend in="SourceGraphic" in2="gi" mode="multiply"/></filter>
<filter id="leaftex" x="0" y="0" width="100%" height="100%"><feTurbulence type="fractalNoise" baseFrequency=".12 .14" numOctaves="3" seed="11" result="n"/><feColorMatrix in="n" type="matrix" values="2.4 0 0 0 -.6  2.4 0 0 0 -.6  2.4 0 0 0 -.6  0 0 0 0 1" result="g"/><feComposite in="g" in2="SourceGraphic" operator="in" result="gi"/><feBlend in="SourceGraphic" in2="gi" mode="multiply"/></filter>
<filter id="b6" x="-10%" y="-10%" width="120%" height="120%"><feGaussianBlur stdDeviation="7"/></filter>
<filter id="b3" x="-10%" y="-10%" width="120%" height="120%"><feGaussianBlur stdDeviation="3"/></filter>
<filter id="b1"><feGaussianBlur stdDeviation="1.2"/></filter>
<filter id="rough" x="-5%" y="-5%" width="110%" height="110%"><feTurbulence type="fractalNoise" baseFrequency=".035 .09" numOctaves="2" seed="4" result="n"/><feDisplacementMap in="SourceGraphic" in2="n" scale="16"/></filter>
<clipPath id="photo"><path d="M1470 212 C1500 198 1560 190 1640 192 C1730 194 1810 204 1852 224 C1872 240 1876 290 1880 340 C1886 400 1886 440 1868 470 L1850 520 L1470 600 Z"/></clipPath>
<mask id="photomask" maskUnits="userSpaceOnUse" x="1470" y="150" width="450" height="500"><path d="M1465 218 C1500 204 1560 198 1640 199 C1730 201 1806 211 1846 231 C1864 244 1868 292 1872 340 C1878 400 1878 438 1860 468 L1846 520 L1465 600 Z" fill="#fff" filter="url(#b6)"/></mask>
</defs>
<rect x="1480" y="87" width="423" height="953" fill="#fff"/>
<rect x="1480" y="87" width="34" height="953" fill="url(#shade)"/>
<!-- sendsay logo -->
<g>
<path d="M1596.25 139.30 L1604.22 143.90 L1604.22 153.10 L1596.25 157.70 L1588.28 153.10 L1588.28 143.90 Z" fill="#f8608f"/>
<path d="M1568.00 155.40 L1575.97 160.00 L1575.97 169.20 L1568.00 173.80 L1560.03 169.20 L1560.03 160.00 Z" fill="#8e1b52"/>
<path d="M1586.90 155.40 L1594.87 160.00 L1594.87 169.20 L1586.90 173.80 L1578.93 169.20 L1578.93 160.00 Z" fill="#bd1550"/>
<path d="M1577.50 171.40 L1585.47 176.00 L1585.47 185.20 L1577.50 189.80 L1569.53 185.20 L1569.53 176.00 Z" fill="#f8608f"/>
<text x="1614" y="177.500" font-family="Liberation Sans, sans-serif" font-size="33" fill="#6b6b6b" textLength="135.500" lengthAdjust="spacingAndGlyphs">sendsay</text>
</g>
<!-- photo -->
<g mask="url(#photomask)">
<rect x="1470" y="180" width="440" height="440" fill="url(#sky)"/>
<rect x="1470" y="180" width="440" height="300" fill="url(#cloudL)"/>
<rect x="1470" y="180" width="440" height="300" fill="url(#cloudR)"/>
<ellipse cx="1660" cy="212" rx="90" ry="22" fill="#e4ebf2" opacity=".75" filter="url(#b6)"/>
<ellipse cx="1730" cy="300" rx="110" ry="16" fill="#dcecf6" opacity=".5" filter="url(#b6)" transform="rotate(14 1730 300)"/>
<ellipse cx="1545" cy="335" rx="80" ry="16" fill="#eef6fa" opacity=".6" filter="url(#b6)"/>
<ellipse cx="1790" cy="375" rx="100" ry="28" fill="#f3f5f4" opacity=".8" filter="url(#b6)"/>
<rect x="1470" y="260" width="440" height="240" fill="url(#sun)"/>
<!-- mountains -->
<path d="M1480 408 L1500 404 L1530 409 L1560 403 L1600 408 L1650 412 L1690 402 L1712 408 L1740 403 L1770 405 L1800 401 L1830 404 L1880 408 V520 H1480 Z" fill="url(#mt1)" filter="url(#b1)"/>
<path d="M1480 462 L1540 452 L1590 440 L1625 420 L1660 412 L1690 426 L1715 410 L1740 418 L1765 414 L1786 402 L1802 408 L1812 420 L1840 418 L1885 424 V540 H1480 Z" fill="url(#mt2)" filter="url(#b1)"/>
<path d="M1560 500 L1650 476 L1700 448 L1735 454 L1780 440 L1830 448 L1885 446 V540 H1560 Z" fill="#5f6962" opacity=".85" filter="url(#b3)"/>
<!-- foliage -->
<g filter="url(#leaftex)">
<path d="M1480 418 C1492 414 1506 417 1518 426 C1530 426 1540 434 1548 446 C1560 450 1572 460 1580 468 C1588 472 1594 477 1598 484 L1560 505 H1480 Z" fill="#566627"/>
<path d="M1480 418 C1492 414 1506 417 1518 426 C1530 426 1540 434 1548 446 L1540 450 C1530 440 1516 434 1504 430 C1496 426 1488 424 1480 426 Z" fill="#8a7630"/>
<path d="M1480 452 C1496 446 1514 450 1524 460 C1538 462 1550 470 1562 482 L1480 505 Z" fill="#6e8c2e"/>
<path d="M1480 432 C1490 430 1500 434 1507 442 C1500 448 1490 452 1480 454 Z" fill="#3e4e1a"/>
<path d="M1510 440 C1522 440 1534 448 1540 460 C1528 460 1516 452 1510 440 Z" fill="#46581e"/>
</g>
<!-- rock -->
<g filter="url(#rocktex)">
<path d="M1480 499 C1520 488 1556 480 1578 475 C1600 468 1616 464 1629 463 C1650 462 1665 463 1677 464 C1695 466 1708 469 1721 473 C1742 480 1756 486 1768 492 L1790 500 L1700 570 L1480 610 Z" fill="#ab9e97"/>
<path d="M1500 512 C1540 496 1580 488 1612 478 L1642 498 L1580 522 L1520 544 Z" fill="#cfc4be" opacity=".6"/>
<path d="M1622 468 L1690 478 L1742 494 L1690 522 L1640 506 Z" fill="#7d716c" opacity=".8"/>
<path d="M1480 522 L1560 506 L1600 530 L1520 560 L1480 566 Z" fill="#776b66" opacity=".75"/>
</g>
<!-- hiker: legs -->
<path d="M1625 366 C1620 385 1618 400 1619 414 C1616 432 1611 448 1609 461 L1621 463 C1626 446 1634 428 1638 412 C1640 398 1644 384 1647 372 Z" fill="#c8681d"/>
<path d="M1625 368 C1621 385 1619 400 1620 414 C1618 428 1614 444 1611 458 L1615 459 C1620 440 1626 420 1628 404 C1629 392 1632 380 1634 370 Z" fill="#f6a13a"/>
<path d="M1647 372 C1648 392 1650 410 1652 424 C1652 440 1652 452 1652 462 L1663 463 C1665 448 1666 432 1666 418 C1668 402 1668 388 1668 374 Z" fill="#a3541c"/>
<!-- shoes -->
<path d="M1602 470 C1604 463 1610 460 1622 462 L1626 470 C1620 476 1610 479 1603 477 Z" fill="#c9a526"/><path d="M1608 458 H1621 V464 H1608 Z" fill="#e9e6de"/>
<path d="M1649 470 C1650 463 1656 460 1666 463 C1672 466 1676 470 1677 474 C1670 479 1658 480 1651 478 Z" fill="#7f7b57"/><path d="M1652 458 H1663 V464 H1652 Z" fill="#e9e6de"/><path d="M1662 468 L1675 472 L1672 477 L1660 475 Z" fill="#d0ac28"/>
<!-- shorts -->
<path d="M1621 346 H1674 L1676 366 C1668 372 1656 374 1647 372 C1640 372 1630 370 1622 366 Z" fill="#4e4035"/>
<!-- torso/arm -->
<path d="M1645 272 C1652 266 1660 268 1664 276 L1670 300 L1672 346 L1640 348 Z" fill="#b98257"/>
<path d="M1657 280 C1664 276 1670 280 1670 288 L1668 306 C1664 312 1658 312 1654 306 Z" fill="#9e6a45"/>
<!-- backpack -->
<path d="M1606 300 C1604 292 1612 286 1626 286 C1645 286 1656 292 1660 304 L1672 330 C1678 346 1670 356 1652 358 C1634 360 1618 356 1612 346 C1608 332 1606 316 1606 300 Z" fill="#333e57"/>
<path d="M1626 300 C1638 296 1652 300 1660 312 L1670 336 C1660 348 1640 348 1630 340 Z" fill="#505c7a" opacity=".85"/>
<path d="M1590 288 C1588 276 1596 268 1612 266 C1628 263 1644 266 1647 276 C1650 290 1640 302 1622 306 C1606 310 1594 302 1590 288 Z" fill="#27374a"/>
<path d="M1604 272 C1616 268 1630 270 1638 278 C1630 290 1614 294 1602 288 Z" fill="#3f566e" opacity=".8"/>
<path d="M1597 302 L1604 300 L1608 326 L1602 340 L1596 330 Z" fill="#3b4863"/>
<path d="M1610 346 L1615 348 L1614 411 L1610 411 Z" fill="#d5502a"/><path d="M1674 328 L1678 330 L1679 382 L1675 382 Z" fill="#7b7f88"/>
<!-- head -->
<path d="M1624 264 C1620 252 1630 240 1644 240 C1656 240 1664 248 1662 258 L1660 270 C1654 272 1648 270 1646 266 C1640 272 1630 270 1624 264 Z" fill="#dcc792"/>
<path d="M1654 256 L1662 258 L1663 268 L1657 272 Z" fill="#c39872"/>
<ellipse cx="1893" cy="390" rx="16" ry="80" fill="#fff" opacity=".8" filter="url(#b6)"/>
<ellipse cx="1880" cy="452" rx="20" ry="34" fill="#fff" opacity=".8" filter="url(#b6)"/>
<ellipse cx="1874" cy="232" rx="18" ry="24" fill="#fff" opacity=".6" filter="url(#b6)"/>
<!-- sun star -->
<circle cx="1617" cy="375" r="13" fill="#fff6cf" filter="url(#b3)"/><circle cx="1617" cy="375" r="5" fill="#fff"/>
<path d="M1617 375 L1578 366 M1617 375 L1660 356 M1617 375 L1690 436 M1617 375 L1590 410 M1617 375 L1640 398 M1617 375 L1600 352" stroke="#ffe7a0" stroke-width="1.200" opacity=".7"/>
</g>
<!-- teal brush -->
<g filter="url(#rough)">
<path d="M1822 472 L1839 457 L1859 550 L1846 562 L1844 600 L1836 640 L1830 700 L1800 720 Z" fill="#56bcbc"/>
<path d="M1470 700 L1494 700 L1494 768 L1558 760 L1564 772 L1530 788 L1494 802 L1470 804 Z" fill="#4fb9bb"/>
<path d="M1470 561 L1524 548 L1557 529 L1611 522 L1633 525 L1642 548 L1651 538 L1677 533 L1699 524 L1732 511 L1764 493 L1797 482 L1822 468 L1822 714 L1802 736 L1798 760 L1768 778 L1734 792 L1700 799 L1669 802 L1630 798 L1592 791 L1572 779 L1558 764 L1530 764 L1492 770 L1470 772 Z" fill="#1ba2a6"/>
</g>
<path d="M1480 568 L1524 556 L1560 538 L1611 530 L1630 534 L1642 556 L1655 546 L1700 532 L1735 518 L1766 502 L1800 489 L1830.600 474 V717 H1494 V700 H1480 Z" fill="#1ba2a6"/>
<!-- ad text -->
<g fill="#fff" font-family="Liberation Sans, sans-serif" font-size="29">
<text x="1577" y="586.500" textLength="156" lengthAdjust="spacingAndGlyphs">Покоряйте</text>
<text x="1536.500" y="620" textLength="236.500" lengthAdjust="spacingAndGlyphs">email-маркетинг</text>
<text x="1605.500" y="655" textLength="99" lengthAdjust="spacingAndGlyphs">вместе</text>
<text x="1574.500" y="689" textLength="161.500" lengthAdjust="spacingAndGlyphs">с SENDSAY</text>
</g>
<rect x="1543" y="709" width="224" height="46" rx="6" fill="#0b5a5c" opacity=".35" filter="url(#b3)"/>
<rect x="1542.500" y="707" width="224" height="46" rx="6" fill="#b8174f"/>
<text x="1561.500" y="736" font-family="Liberation Sans, sans-serif" font-size="19" fill="#fff" textLength="186.500" lengthAdjust="spacingAndGlyphs">Зарегистрироваться</text>
</svg>

</div>
<div id="scroll" class="abs"></div>

<div class="abs" style="left:1904px;top:87px;width:15px;height:953px;background:#fcfcfc"></div>
<div class="abs" style="left:1908px;top:104px;width:9px;height:205px;border-radius:4.500px;background:#8b8b8b"></div>
<svg class="abs" style="left:1907px;top:92px" width="11" height="7" viewBox="0 0 11 7"><path d="M0.500 6.500 L5.500 1 L10.500 6.500 Z" fill="#8b8b8b"/></svg>
<svg class="abs" style="left:1907px;top:1026px" width="11" height="7" viewBox="0 0 11 7"><path d="M0.500 0.500 L5.500 6 L10.500 0.500 Z" fill="#8b8b8b"/></svg>

<div id="taskbar" class="abs"></div>

<div class="abs" style="left:0;top:1040px;width:1919px;height:38px;background:radial-gradient(ellipse 500px 60px at 900px 30px,#1c1b14,rgba(28,27,20,0) 70%),radial-gradient(ellipse 300px 50px at 1500px 10px,#191912,rgba(25,25,18,0) 70%),#0d0d09"></div>
<div class="abs" style="left:100px;top:1040px;width:48px;height:38px;background:#3b3b39"></div>
<!-- windows -->
<svg class="abs" style="left:15px;top:1051px" width="18" height="18" viewBox="0 0 18 18"><path d="M0.500 2.800 L7.500 1.800 V8.500 H0.500 Z M8.500 1.650 L17.500 0.400 V8.500 H8.500 Z M0.500 9.500 H7.500 V16.200 L0.500 15.200 Z M8.500 9.500 H17.500 V17.600 L8.500 16.350 Z" fill="#fff"/></svg>
<!-- firefox -->
<svg class="abs" style="left:62px;top:1046px" width="26" height="28" viewBox="0 0 26 28"><defs><radialGradient id="ffg" cx=".7" cy=".2" r=".95"><stop offset="0" stop-color="#ffe14a"/><stop offset=".35" stop-color="#ff9a1f"/><stop offset=".7" stop-color="#f0433b"/><stop offset="1" stop-color="#d52a64"/></radialGradient></defs><path d="M13 4 C14.500 2.500 15 1.500 15 0.500 C18 2 19.500 4.500 19.800 6.500 C21 5.800 21.500 5 21.800 4 C24 7 25 10.500 25 14.500 C25 21.500 19.500 26.500 13 26.500 C6.500 26.500 1 21.500 1 14.800 C1 11 2.500 8 4.500 6 C4.500 7.500 5 8.500 6 9 C7.500 6.500 10 5 13 4 Z" fill="url(#ffg)"/><circle cx="13" cy="15.500" r="6.200" fill="#7a3fd0"/><path d="M7 13 C9 10.500 13 10.500 15 12 C12.500 12 11.500 13.500 12 15 C13 17.500 17 17.500 18.500 15 C19 19 16 21.700 13 21.700 C9 21.700 6 18 7 13 Z" fill="#ff8a1f"/></svg>
<!-- chrome -->
<svg class="abs" style="left:112px;top:1048px" width="24" height="24" viewBox="-12 -12 24 24"><circle r="12" fill="#fff"/><path d="M0 0 L-10.390 -6 A12 12 0 0 1 10.390 -6 Z" fill="#ea4335"/><path d="M0 0 L10.390 -6 A12 12 0 0 1 0 12 Z" fill="#fbbc04"/><path d="M0 0 L0 12 A12 12 0 0 1 -10.390 -6 Z" fill="#34a853"/><path d="M0 -6 H10.390" stroke="#ea4335" stroke-width="0"/><circle r="5.600" fill="#fff"/><circle r="4.400" fill="#4285f4"/></svg>
<!-- opera -->
<svg class="abs" style="left:161px;top:1048px" width="24" height="24" viewBox="0 0 24 24"><ellipse cx="12" cy="12" rx="11.500" ry="12" fill="#e0101d"/><ellipse cx="12" cy="12" rx="5" ry="8.800" fill="#0d0d09"/></svg>
<!-- yandex -->
<svg class="abs" style="left:210px;top:1048px" width="24" height="24" viewBox="0 0 24 24"><circle cx="12" cy="12" r="12" fill="#fff"/><path d="M6.300 5.500 L12 13 V20 M17.700 5.500 L12 13" fill="none" stroke="#fc3f1d" stroke-width="2.800" stroke-linecap="round"/><path d="M17.700 5.500 L15.500 8.400" stroke="#f857a6" stroke-width="2.800" stroke-linecap="round"/></svg>
<!-- tray -->
<svg class="abs" style="left:1650px;top:1055px" width="14" height="9" viewBox="0 0 14 9"><path d="M1 8 L7 2 L13 8" fill="none" stroke="#fff" stroke-width="1.300"/></svg>
<svg class="abs" style="left:1673px;top:1051px" width="17" height="18" viewBox="0 0 17 18"><path d="M1 17 C2 10 7 3 16 1 C15 8 10 13 3 15 Z" fill="#b77be0"/><path d="M1 17 C4 11 9 6 16 1" stroke="#7a3fb0" stroke-width="1" fill="none"/></svg>
<svg class="abs" style="left:1697px;top:1053px" width="18" height="16" viewBox="0 0 18 16"><path d="M3.500 11.500 C0.500 11.500 0.500 7.500 3.500 7 C4 3 9.500 1.500 12 4.500 C15.500 4 17 8 14.500 10" fill="none" stroke="#fff" stroke-width="1.300"/><path d="M5 8 L10 4" stroke="#fff" stroke-width="1.200"/><circle cx="11" cy="11" r="4" fill="#1f9a2a"/><text x="11" y="13.300" text-anchor="middle" font-family="Liberation Sans, sans-serif" font-size="6" font-weight="bold" fill="#fff">1</text></svg>
<svg class="abs" style="left:1720px;top:1053px" width="18" height="15" viewBox="0 0 18 15"><path d="M3.500 1.500 H16.500 V10 H5.500 M10.500 10 V13.500 M6.500 13.500 H14 M1 2 H5 V5 H1 Z M3 5 V13.500 H6.500" fill="none" stroke="#fff" stroke-width="1.100"/></svg>
<svg class="abs" style="left:1744px;top:1052px" width="19" height="16" viewBox="0 0 19 16"><path d="M1 5.500 H4 L8 1.500 V14.500 L4 10.500 H1 Z" fill="none" stroke="#fff" stroke-width="1.100" stroke-linejoin="round"/><path d="M10.500 5.500 C11.500 7 11.500 9 10.500 10.500 M13 3.500 C15 6 15 10 13 12.500 M15.500 1.500 C18.500 5 18.500 11 15.500 14.500" fill="none" stroke="#fff" stroke-width="1.100"/></svg>
<div class="t" style="left:1772px;top:1054px;font-size:11.500px;color:#fff">РУС</div>
<div class="t" style="left:1822.500px;top:1046px;font-size:11.300px;color:#fff">2:42</div>
<div class="t" style="left:1807px;top:1064px;font-size:10.900px;color:#fff">23.03.2026</div>
<svg class="abs" style="left:1878px;top:1051px" width="28" height="27" viewBox="0 0 28 27"><path d="M1 1.500 H17.500 V13.500 H6 V17 L2.500 13.500 H1 Z" fill="#fff"/><path d="M3.500 4.500 H15 M3.500 7.500 H15 M3.500 10.500 H15" stroke="#0d0d09" stroke-width="1"/><circle cx="16" cy="16" r="8.500" fill="#3a3a3a" stroke="#9a9a9a" stroke-width="1"/><text x="16" y="19.700" text-anchor="middle" font-family="Liberation Sans, sans-serif" font-size="10.500" font-weight="bold" fill="#fff">21</text></svg>
<div class="abs" style="left:1914px;top:1040px;width:1px;height:38px;background:#5a5a5a"></div>

</body>
</html>
